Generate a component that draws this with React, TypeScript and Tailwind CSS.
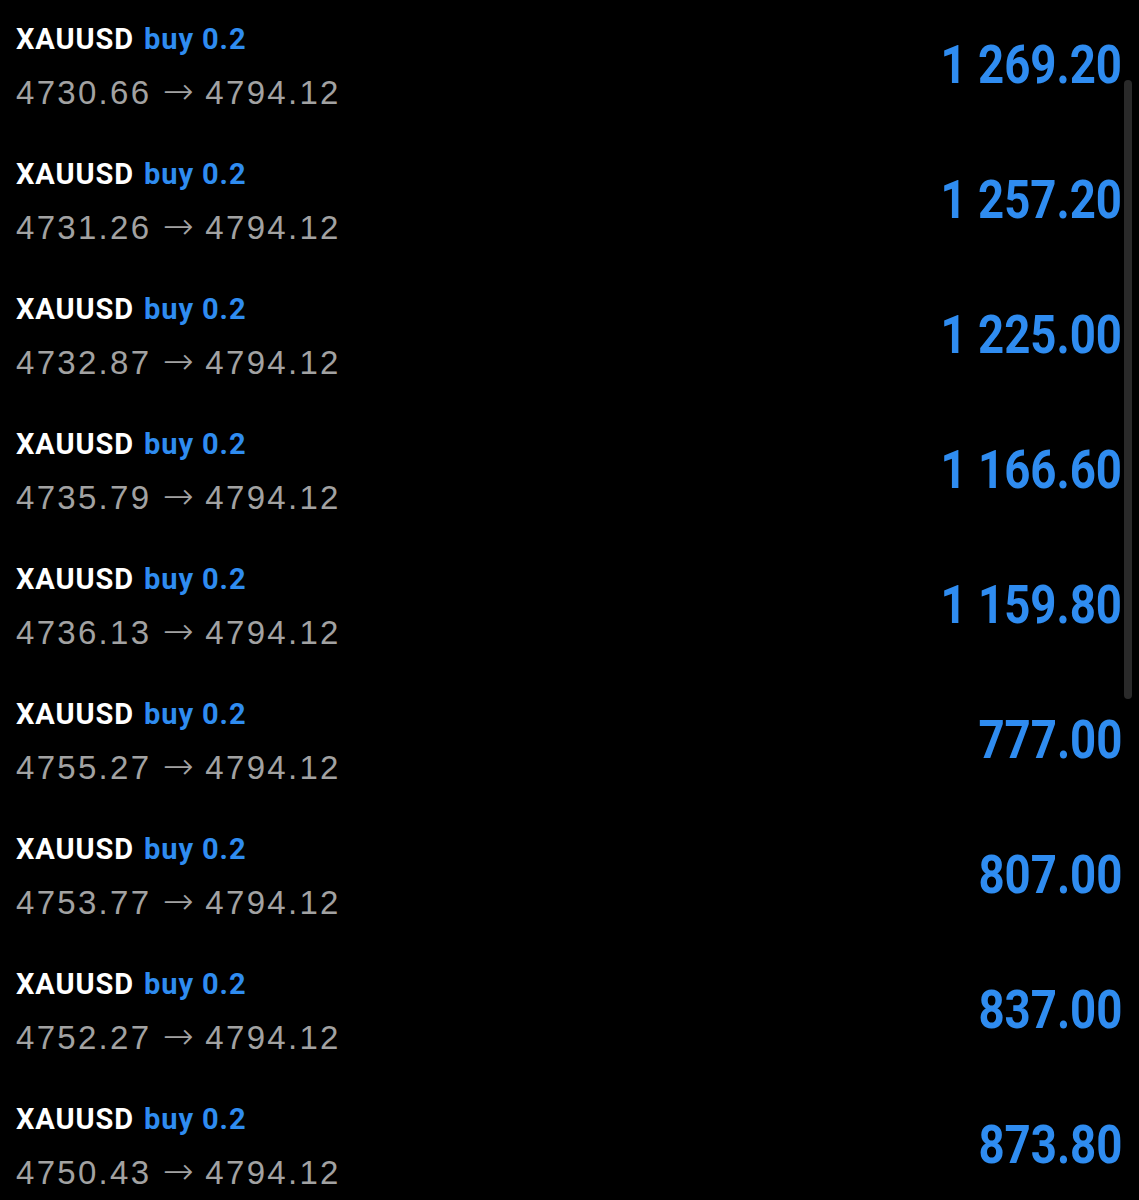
const trades = [
  { open: "4730.66", close: "4794.12", profit: "1 269.20" },
  { open: "4731.26", close: "4794.12", profit: "1 257.20" },
  { open: "4732.87", close: "4794.12", profit: "1 225.00" },
  { open: "4735.79", close: "4794.12", profit: "1 166.60" },
  { open: "4736.13", close: "4794.12", profit: "1 159.80" },
  { open: "4755.27", close: "4794.12", profit: "777.00" },
  { open: "4753.77", close: "4794.12", profit: "807.00" },
  { open: "4752.27", close: "4794.12", profit: "837.00" },
  { open: "4750.43", close: "4794.12", profit: "873.80" },
];

function TradeRow({ open, close, profit }: { open: string; close: string; profit: string }) {
  return (
    <div className="flex h-[135px] shrink-0 items-center justify-between pl-4 pr-[17px]">
      <div className="flex flex-col">
        <div className="font-['Roboto',sans-serif] text-[29px] font-bold leading-[34px] tracking-[0.9px] text-white">
          XAUUSD <span className="ml-[2px] text-[#2f8cf0]">buy 0.2</span>
        </div>
        <div className="mt-[16px] font-['Liberation_Sans',sans-serif] text-[33px] leading-[40px] tracking-[2.3px] text-[#a2a2a2]">
          {open}{" "}
          <span className="font-['DejaVu_Sans',sans-serif] text-[37px] font-light leading-[40px] tracking-normal">→</span>{" "}
          {close}
        </div>
      </div>
      <div className="origin-right scale-x-[0.86] pb-1 font-['Roboto',sans-serif] text-[53px] font-bold leading-[53px] text-[#2f8cf0]">
        {profit}
      </div>
    </div>
  );
}

export default function App() {
  return (
    <div className="relative h-[1200px] w-full overflow-hidden bg-black">
      <div className="flex flex-col">
        {trades.map((t, i) => (
          <TradeRow key={i} {...t} />
        ))}
      </div>
      {/* scroll indicator */}
      <div className="absolute right-[7px] top-[80px] h-[619px] w-[8px] rounded-full bg-[#2a2a2a]" />
    </div>
  );
}
